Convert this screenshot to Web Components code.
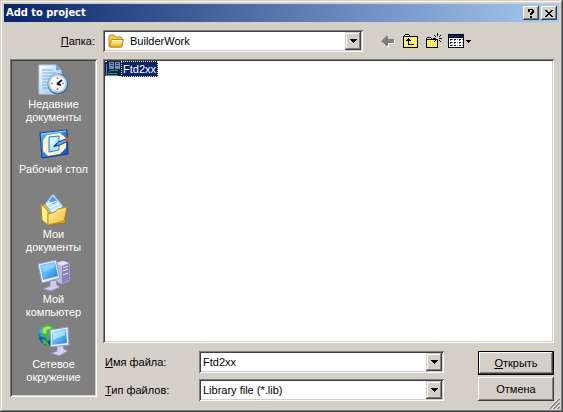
<!DOCTYPE html>
<html lang="ru">
<head>
<meta charset="utf-8">
<title>Add to project</title>
<style>
html,body{height:100%;margin:0}
body{font:11px/13px "Liberation Sans",Arial,sans-serif;color:#000;
--face:#d4d0c8;--shade:#808080;--dark:#404040;--navy:#0a246a}
</style>
</head>
<body>
<file-dialog></file-dialog>

<template id="t-dialog">
<style>
:host{display:flex;flex-direction:column;position:relative;box-sizing:border-box;min-height:100vh;background:var(--face);padding:4px;
box-shadow:inset -1px -1px var(--dark),inset 1px 1px var(--face),inset -2px -2px var(--shade),inset 2px 2px #fff}
main{flex:1;display:grid;grid-template-columns:87px minmax(0,1fr);grid-template-rows:22px minmax(0,1fr) auto;column-gap:6px;padding:8px 5px 7px 6px}
.top{grid-column:1/3;display:flex;align-items:center;gap:13px}
.top dialog-field{flex:0 1 353px}
places-bar{grid-row:2/4;margin:7px 0 4px}
file-list{margin:7px 0 8px}
.bottom{display:grid;grid-template-columns:minmax(0,1fr) 76px;column-gap:34px}
.fields{display:grid;gap:6px}
.actions{display:grid;gap:2px}
.grip{position:absolute;right:3px;bottom:3px}
</style>
<title-bar>Add to project</title-bar>
<main>
<div class="top">
<dialog-field kind="folder" value="BuilderWork"><u>П</u>апка:</dialog-field>
<folder-tools></folder-tools>
</div>
<places-bar></places-bar>
<file-list></file-list>
<div class="bottom">
<div class="fields">
<dialog-field kind="text" value="Ftd2xx"><u>И</u>мя файла:</dialog-field>
<dialog-field kind="type" value="Library file (*.lib)"><u>Т</u>ип файлов:</dialog-field>
</div>
<div class="actions">
<push-button default><u>О</u>ткрыть</push-button>
<push-button>Отмена</push-button>
</div>
</div>
</main>
<svg class="grip" width="13" height="13" aria-hidden="true"><path d="M1 13 13 1M5 13 13 5M9 13 13 9" stroke="#fff" stroke-width="1"/><path d="M2.5 13 13 2.5M6.5 13 13 6.5M10.5 13 13 10.5" stroke="#808080" stroke-width="1.500"/></svg>
</template>

<template id="t-title">
<style>
:host{display:flex;align-items:center;height:18px;padding:0 2px;background:linear-gradient(90deg,#0a246a,#a6caf0);color:#fff}
h1{flex:1;margin:0;font:bold 11px/18px "DejaVu Sans Condensed","DejaVu Sans",sans-serif}
button{width:16px;height:14px;padding:0;border:0;background:var(--face);box-shadow:inset -1px -1px var(--dark),inset 1px 1px #fff,inset -2px -2px var(--shade);display:grid;place-items:center}
button+button{margin-left:2px}
</style>
<h1><slot></slot></h1>
<button aria-label="Справка"><svg width="8" height="9" shape-rendering="crispEdges"><path d="M1 0h5v1h1v3H6v1H5v1H3V4h1V3h1V1H3v2H1zM3 7h2v2H3z"/></svg></button>
<button aria-label="Закрыть"><svg width="8" height="7" shape-rendering="crispEdges"><path d="M0 0h2v1h1v1h2V1h1V0h2v1H7v1H6v1H5v1h1v1h1v1h1v1H6V6H5V5H3v1H2v1H0V6h1V5h1V4h1V3H2V2H1V1H0z"/></svg></button>
</template>

<template id="t-field">
<style>
:host{display:grid;grid-template-columns:96px minmax(0,1fr);align-items:center;height:22px}
:host([kind=folder]){grid-template-columns:93px minmax(0,1fr)}
label{padding-left:2px}
:host([kind=folder]) label{text-align:right;padding-right:8px}
.box{display:grid;grid-template-columns:minmax(0,1fr) 16px;height:22px;box-sizing:border-box;padding:2px;background:#fff;
box-shadow:inset 1px 1px var(--shade),inset -1px -1px #fff,inset 2px 2px var(--dark),inset -2px -2px var(--face)}
select,input{grid-area:1/1/2/3;min-width:0;width:100%;height:18px;box-sizing:border-box;margin:0;border:0;border-radius:0;padding:0 16px 0 2px;background:none;font:inherit;color:inherit;appearance:none;outline:0}
:host([kind=folder]) select{padding-left:25px}
.icon{grid-area:1/1;margin:1px 0 0 3px;pointer-events:none}
.drop{grid-area:1/2;display:grid;place-items:center;padding:0;border:0;background:var(--face);pointer-events:none;
box-shadow:inset -1px -1px var(--dark),inset 1px 1px var(--face),inset -2px -2px var(--shade),inset 2px 2px #fff}
</style>
<label for="control"><slot></slot></label>
<div class="box"><span class="drop"><svg width="7" height="4" shape-rendering="crispEdges"><path d="M0 0h7v1H6v1H5v1H4v1H3V3H2V2H1V1H0z"/></svg></span></div>
</template>

<template id="t-folder">
<svg class="icon" width="16" height="16" viewBox="0 0 16 16"><defs><linearGradient id="f" x2="0" y2="1"><stop stop-color="#fff6a8"/><stop offset="1" stop-color="#efb52c"/></linearGradient></defs><path d="M1 13V3l1-1h4l2 2h5l1 1v8l-1 1H2z" fill="#f3cf55" stroke="#b98a1e"/><path d="M3.500 6.500h12l-2 7.500H1.500z" fill="url(#f)" stroke="#b98a1e"/><path d="M4.500 7.500h9.500" stroke="#fffbd8"/></svg>
</template>

<template id="t-tools">
<style>
:host{display:flex}
button{flex:none;height:22px;padding:0 3px 0 4px;border:0;background:none;display:flex;align-items:center;gap:2px}
button:first-child{padding-left:3px}
button:last-child{padding-left:2px}
svg{display:block}
</style>
<button aria-label="Назад" disabled><svg width="16" height="16" shape-rendering="crispEdges"><path d="M2 9h1v1h1v1h1v1h1v1h2v-3h6V7h1v4H9v3H7v-1H6v-1H5v-1H4v-1H3z" fill="#fff"/><path d="M1 8h1V7h1V6h1V5h1V4h1V3h2v3h6v4H8v3H6v-1H5v-1H4v-1H3V9H1z" fill="#808080"/></svg></button>
<button aria-label="На один уровень вверх"><svg width="16" height="16" shape-rendering="crispEdges"><path d="M2 1h4v1h1v1h8v12H0V3h1V2h1z"/><path d="M2 2h4v1H2zM1 4h13v10H1z" fill="#f5f067"/><path d="M5 5h1v1h1v1h1v1H6v3h5v1H5V8H3V7h1V6h1z"/></svg></button>
<button aria-label="Создание новой папки"><svg width="17" height="16" shape-rendering="crispEdges"><path d="M1 4h4v1h1v1h6v9H0V5h1z"/><path d="M1 5h4v1H1zM1 7h10v7H1z" fill="#f5f067"/><path d="M11 0h1v3h-1zM11 7h1v3h-1zM7 5h3v1H7zM13 5h3v1h-3zM8 2h1v1H8zM9 3h1v1H9zM14 2h1v1h-1zM13 3h1v1h-1zM9 7h1v1H9zM13 7h1v1h-1zM14 8h1v1h-1zM8 8h1v1H8z"/><path d="M11 5h1v1h-1z" fill="#fff"/></svg></button>
<button aria-label="Меню Вид"><svg width="16" height="16" shape-rendering="crispEdges"><path d="M0 1h16v14H0z"/><path d="M1 2h14v2H1z" fill="#0a246a"/><path d="M1 5h14v9H1z" fill="#fff"/><path d="M2 6h2v1H2zM6 6h2v1H6zM11 6h2v1h-2zM2 9h2v1H2zM6 9h2v1H6zM11 9h2v1h-2zM2 12h2v1H2zM6 12h2v1H6zM11 12h2v1h-2z" fill="#000080"/><path d="M2 7h1v1H2zM6 7h1v1H6zM11 7h1v1h-1zM2 10h1v1H2zM6 10h1v1H6zM11 10h1v1h-1zM4 6h1v1H4zM9 6h1v1H9zM14 6h1v1h-1zM4 9h1v1H4zM9 9h1v1H9zM14 9h1v1h-1zM4 12h1v1H4zM9 12h1v1H9zM14 12h1v1h-1z" fill="#6d6d9c"/></svg><svg width="5" height="3" shape-rendering="crispEdges"><path d="M0 0h5v1H4v1H3v1H2V2H1V1H0z"/></svg></button>
</template>

<template id="t-places">
<style>
:host{display:flex;flex-direction:column;gap:5px;box-sizing:border-box;padding:5px 2px 4px;background:#808080;color:#fff;
box-shadow:inset 1px 1px var(--shade),inset -1px -1px #fff,inset 2px 2px var(--dark),inset -2px -2px var(--face)}
</style>
<place-item label="Недавние документы"><svg width="32" height="32" viewBox="0 0 32 32"><defs><linearGradient id="p" x2="1" y2="1"><stop stop-color="#fff"/><stop offset="1" stop-color="#8fbcf0"/></linearGradient></defs><path d="M1 1h17l5 5v24H1z" fill="url(#p)" stroke="#b5d2f4"/><path d="M18 1v5h5" fill="#5ca2e8"/><path d="M4 6h11M4 9h14M4 12h10M4 15h7M4 18h6M4 21h6M4 24h7" stroke="#77aef0"/><circle cx="20" cy="20" r="10.5" fill="#496c90"/><circle cx="19.500" cy="19.500" r="9.500" fill="#b5d2e9"/><circle cx="19.500" cy="19.500" r="7.500" fill="#f4fbff"/><path d="M19.500 13v2M19.500 24v2M13 19.500h2M24 19.500h2" stroke="#ef7045" stroke-width="1.500"/><path d="m19 20 5-4M19 20l4 1" stroke="#123" stroke-width="2"/></svg></place-item>
<place-item label="Рабочий стол"><svg width="32" height="32" viewBox="0 0 32 32"><defs><linearGradient id="d" x2="1" y2="1"><stop stop-color="#62bafc"/><stop offset="1" stop-color="#064eb5"/></linearGradient></defs><path d="m2 4 27-3 1 24-26 4z" fill="url(#d)" stroke="#073e9b"/><path d="m3 5 25-3" stroke="#a5dbff"/><path d="m9 6 13-2 6 5v10l-6 6-12 2-5-5V11z" fill="#fff2c4"/><path d="m11 8 10-1v14l-10 2z" fill="#b5e1ff" stroke="#2584df"/><path d="m12 9 8-1-7 11z" fill="#dcf5ff"/><path d="m16 17 4-4 8-3 2 2-8 4z" fill="#59a6ef" stroke="#174983"/><path d="m27 9 3-1 2 3-3 2z" fill="#e34c35"/><path d="m15 18 3-3 2 2z" fill="#20385a"/></svg></place-item>
<place-item label="Мои документы"><svg width="32" height="32" viewBox="0 0 32 32"><defs><linearGradient id="m" x2="1" y2="1"><stop stop-color="#fff9af"/><stop offset="1" stop-color="#efb531"/></linearGradient></defs><path d="M4 11 10 8l4 3 15 3-2 15-17 2-6-5z" fill="#e8b83d" stroke="#99721a"/><path d="m15 0 10 12-8 12L7 10z" fill="#c4e6ff" stroke="#6fb3e8"/><path d="m15 2 4 5-3 3-5-3z" fill="#529be4"/><path d="m9 11 9-4M11 14l10-4M13 17l10-4" stroke="#fff"/><path d="m3 10 7 7v14l-6-5z" fill="#fff08a" stroke="#b98b24"/><path d="m10 20 7-2 3-3 9-2-3 14-16 4z" fill="url(#m)" stroke="#b88b23"/></svg></place-item>
<place-item label="Мой компьютер"><svg width="32" height="32" viewBox="0 0 32 32"><defs><linearGradient id="s" x2="1" y2="1"><stop stop-color="#70c7ff"/><stop offset=".5" stop-color="#5ab8fa"/><stop offset="1" stop-color="#0870d8"/></linearGradient></defs><path d="m17 4 8-3 7 3v18l-8 4-7-4z" fill="#b9b9dc" stroke="#7977a5"/><path d="m24 6 7-2v17l-7 4z" fill="#8583b8"/><path d="m18 4 7-2 6 2-7 3z" fill="#e4e3f5"/><path d="m25 9 5-2M25 12l5-2M25 16l5-2" stroke="#eee"/><path d="m12 22 6-1 1 5 3 2-9 4-8-2 7-3z" fill="#cdcde9" stroke="#8f90b8"/><path d="m0 5 18-4 4 18-18 5z" fill="#f0f0ff" stroke="#9999cb"/><path d="m2 6 15-3 3 14-15 4z" fill="url(#s)"/><path d="m3 7 13-3 1 4-11 5z" fill="#a6e3ff" opacity=".6"/></svg></place-item>
<place-item label="Сетевое окружение"><svg width="32" height="32" viewBox="0 0 32 32"><defs><radialGradient id="g" cx=".3" cy=".25"><stop stop-color="#a1eaff"/><stop offset=".6" stop-color="#2b8ce4"/><stop offset="1" stop-color="#074b9d"/></radialGradient><linearGradient id="n" x2="1" y2="1"><stop stop-color="#a5edff"/><stop offset="1" stop-color="#1482e5"/></linearGradient></defs><circle cx="11" cy="11" r="10.500" fill="url(#g)"/><path d="M2 5 8 0l9 2 3 6-6 3-4 7-3-5-5-1 4-4zM3 15l5 1 4 6-6-2z" fill="#49b54a"/><path d="m5 4 5-2 4 2-5 2-1 4-3-1z" fill="#abe65e"/><path d="m19 22 6-2 1 5 4 2-9 5-8-3 6-2z" fill="#d5d4ee" stroke="#8889b8"/><path d="m12 6 18-3 1 18-18 2z" fill="#f0efff" stroke="#9796ca"/><path d="m14 8 14-3 1 14-15 2z" fill="url(#n)"/><path d="m15 9 12-3v5l-12 5z" fill="#d5f8ff" opacity=".6"/></svg></place-item>
</template>

<template id="t-place">
<style>
:host{display:block}
button{display:flex;flex-direction:column;align-items:center;gap:2px;width:100%;height:60px;padding:0;border:0;background:none;color:inherit;font:inherit;justify-content:flex-start}
span{width:72px}
</style>
<button><slot></slot><span></span></button>
</template>

<template id="t-list">
<style>
:host{display:block;box-sizing:border-box;padding:2px;background:#fff;
box-shadow:inset 1px 1px var(--shade),inset -1px -1px #fff,inset 2px 2px var(--dark),inset -2px -2px var(--face)}
button{display:flex;align-items:center;padding:0;border:0;background:none;font:inherit;color:#fff}
span{height:16px;line-height:16px;box-sizing:border-box;padding:0 2px;background:var(--navy);outline:1px dotted #f5db95;outline-offset:-1px}
</style>
<button aria-pressed="true"><svg width="16" height="16" shape-rendering="crispEdges"><path d="M1 0h15v15H0V1h1z" fill="#0a2058"/><path d="M4 1h5v7H4zM10 1h5v7h-5z" fill="#7d8bab"/><path d="M5 2h3v1H5zM5 4h3v1H5zM11 2h3v1h-3zM11 4h3v1h-3z" fill="#26395f"/><path d="M1 3h1v11H1zM1 14h12v1H1z" fill="#7383a5"/><path d="M5 9h8v1H5zM4 10h1v1H4zM3 12h9v1H3z" fill="#2c9e54"/><path d="M0 0h2v1H0z" fill="#fff"/></svg><span>Ftd2xx</span></button>
</template>

<template id="t-button">
<style>
:host{display:block;height:24px}
button{width:100%;height:24px;padding:0;border:0;background:var(--face);font:inherit;color:inherit;
box-shadow:inset -1px -1px var(--dark),inset 1px 1px #fff,inset -2px -2px var(--shade)}
:host([default]) button{box-shadow:inset 0 0 0 1px #000,inset -2px -2px var(--dark),inset 2px 2px #fff,inset -3px -3px var(--shade)}
</style>
<button><slot></slot></button>
</template>

<script>
class ShadowPart extends HTMLElement {
  constructor() {
    super();
    this.attachShadow({mode: "open"}).append(document.getElementById(this.constructor.template).content.cloneNode(true));
  }
}
const define = (name, template) => customElements.define(name, class extends ShadowPart { static template = template; });

customElements.define("dialog-field", class extends ShadowPart {
  static template = "t-field";
  connectedCallback() {
    const box = this.shadowRoot.querySelector(".box");
    if (box.querySelector("#control")) return;
    const kind = this.getAttribute("kind");
    const value = this.getAttribute("value");
    const control = document.createElement(kind === "text" ? "input" : "select");
    control.id = "control";
    if (kind === "text") control.value = value;
    else control.add(new Option(value));
    box.prepend(control);
    if (kind === "folder") box.prepend(document.getElementById("t-folder").content.cloneNode(true));
  }
});
customElements.define("place-item", class extends ShadowPart {
  static template = "t-place";
  connectedCallback() {
    this.shadowRoot.querySelector("span").textContent = this.getAttribute("label");
  }
});
define("title-bar", "t-title");
define("folder-tools", "t-tools");
define("places-bar", "t-places");
define("file-list", "t-list");
define("push-button", "t-button");
define("file-dialog", "t-dialog");
</script>
</body>
</html>
